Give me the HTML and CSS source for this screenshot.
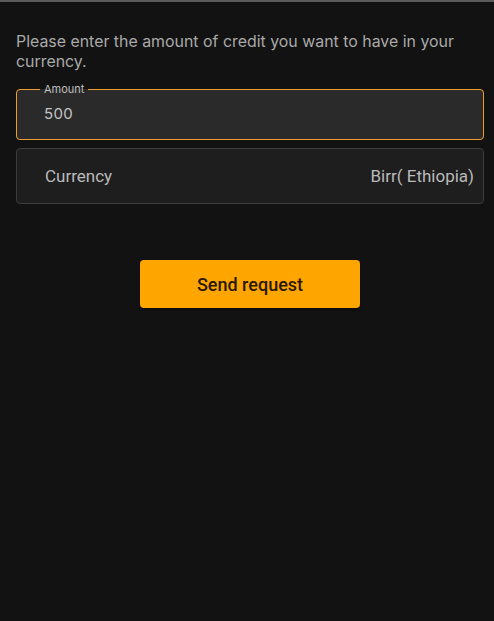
FILE: index.html
```html
<!DOCTYPE html>
<html>
<head>
<meta charset="utf-8">
<link rel="stylesheet" href="styles.css">
</head>
<body>
<div class="page">
  <p class="intro">Please enter the amount of credit you want to have in your currency.</p>
  <fieldset class="amount">
    <legend>Amount</legend>
    <div class="amount-value">500</div>
  </fieldset>
  <div class="currency">
    <span class="currency-label">Currency</span>
    <span class="currency-value">Birr( Ethiopia)</span>
  </div>
  <div class="actions">
    <button class="send">Send request</button>
  </div>
</div>
</body>
</html>
```
FILE: styles.css
```css
html, body {
  margin: 0;
  padding: 0;
  background: #121212;
  height: 100%;
}
body {
  border-top: 2px solid #5a5a5a;
  box-sizing: border-box;
}
.page {
  padding: 30px 10px 0 16px;
  display: flex;
  flex-direction: column;
}
.intro {
  margin: 0;
  font-family: Inter, "Liberation Sans", sans-serif;
  font-size: 15.9px;
  line-height: 20px;
  color: #a9a9a9;
}
.amount {
  margin: 11px 0 0 0;
  padding: 0 27px;
  border: 1px solid #eb9e2e;
  border-radius: 4px;
  background: #2a2a2a;
  min-width: 0;
}
.amount legend {
  padding: 0 4px;
  margin-left: -4px;
  font-family: Inter, "Liberation Sans", sans-serif;
  font-size: 11px;
  line-height: 13px;
  color: #bdbdbd;
}
.amount-value {
  padding: 8px 0 15px;
  font-family: Inter, "Liberation Sans", sans-serif;
  font-size: 15px;
  letter-spacing: 0.3px;
  line-height: 20px;
  color: #c4c4c4;
}
.currency {
  margin-top: 8px;
  height: 56px;
  box-sizing: border-box;
  border: 1px solid #3c3c3c;
  border-radius: 4px;
  background: #1e1e1e;
  display: flex;
  align-items: center;
  justify-content: space-between;
  padding: 0 9px 0 28px;
  font-family: Roboto, "Liberation Sans", sans-serif;
  font-size: 17px;
  color: #bababa;
}
.actions {
  display: flex;
  justify-content: center;
  margin-top: 56px;
}
.send {
  width: 220px;
  height: 48px;
  border: none;
  border-radius: 4px;
  background: #ffa500;
  color: #2a1800;
  font-family: Roboto, "Liberation Sans", sans-serif;
  font-size: 18px;
  font-weight: 500;
  padding: 0;
  box-shadow: 0 2px 3px rgba(0,0,0,0.4);
}
```
